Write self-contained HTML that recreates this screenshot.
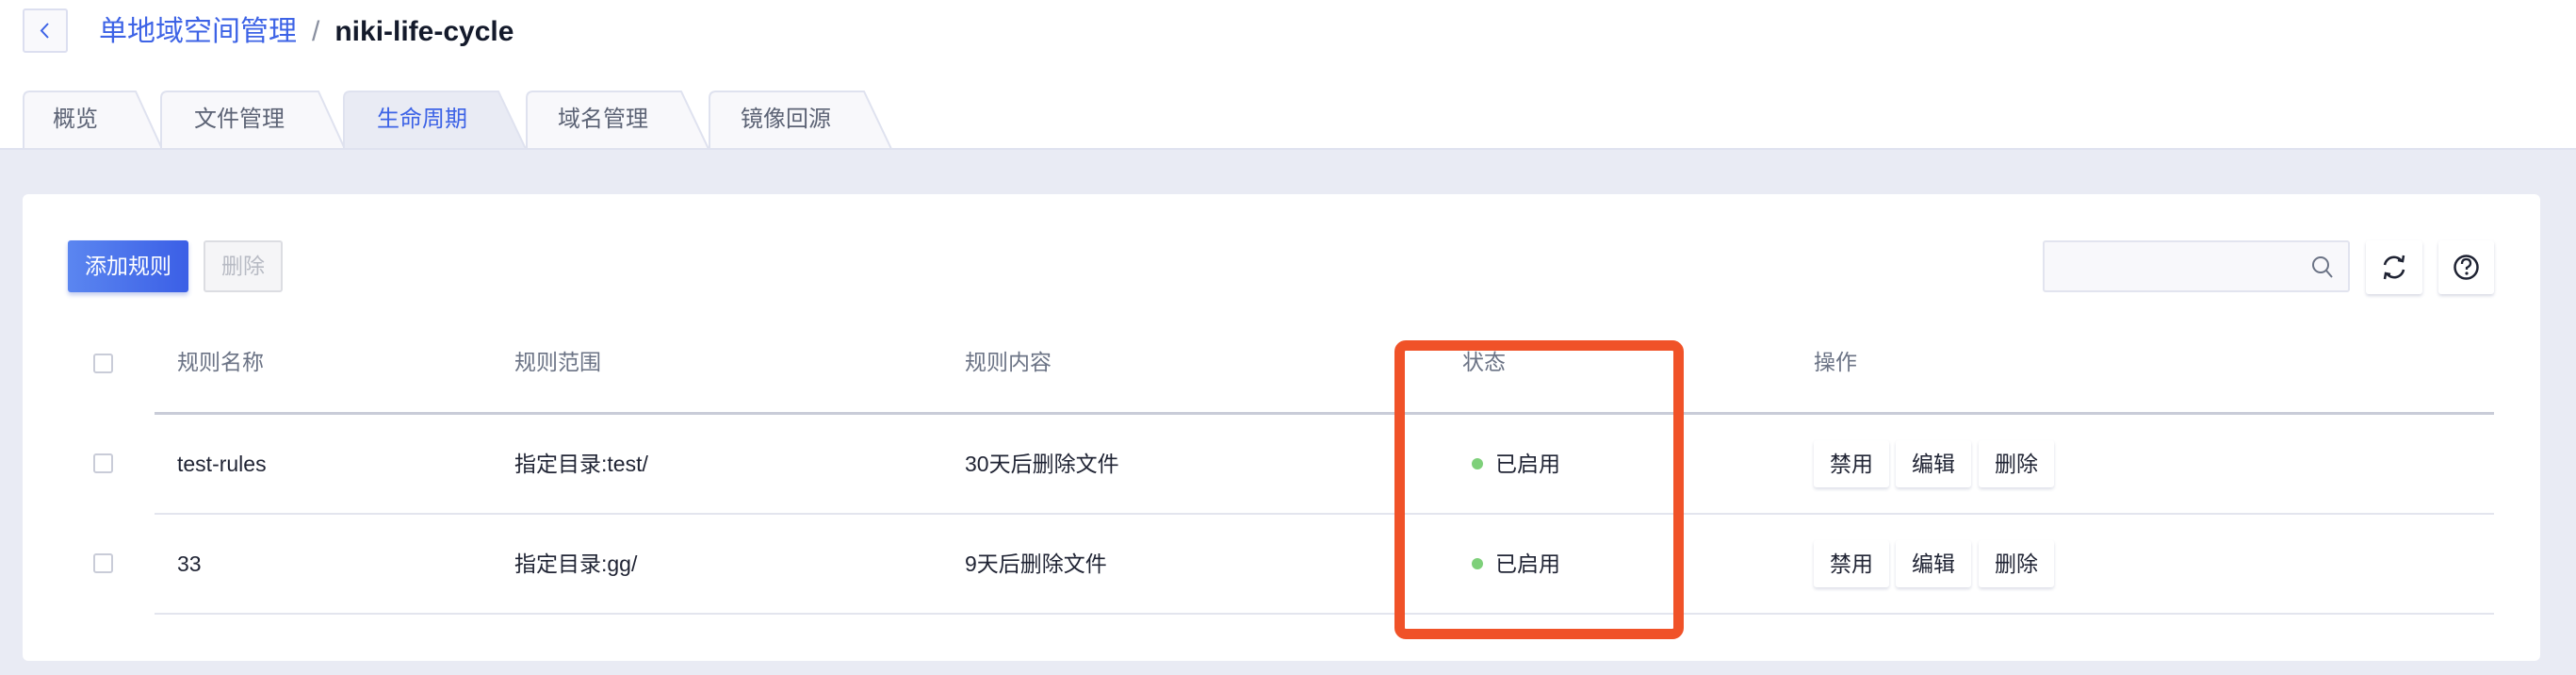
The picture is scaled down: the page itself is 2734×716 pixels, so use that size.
<!DOCTYPE html>
<html><head><meta charset="utf-8"><style>
*{box-sizing:border-box;margin:0;padding:0}
body{width:2734px;height:716px;background:#fff;font-family:"Liberation Sans","Noto Sans CJK SC",sans-serif;position:relative;overflow:hidden;color:#1f2333}
.abs{position:absolute}
.back{left:24px;top:9px;width:48px;height:47px;border:2px solid #dcdff0;border-radius:3px;background:#f9f9fc}
.bc{left:105px;top:14px;font-size:30px;color:#3d63e6;line-height:40px}
.bc .sep{color:#8a90a0;margin:0 16px}
.bc b{color:#141a2b}
.gray{left:0;top:157px;width:2734px;height:559px;background:#e9ebf4;border-top:2px solid #dfe2ef}
.tab{top:96px;height:62px;font-size:24px;color:#5c6375;line-height:62px;padding-left:32px}
.tab svg{position:absolute;left:0;top:0}
.tab span{position:relative}
.card{left:24px;top:206px;width:2672px;height:495px;background:#fff;border-radius:6px}
.btn{border-radius:3px;font-size:23px;text-align:center}
.th{top:369px;font-size:23px;color:#6b7385;line-height:30px}
.td{font-size:23px;color:#1f2333;line-height:30px}
.cb{width:21px;height:21px;border:2px solid #c9ccd8;border-radius:3px;left:99px;background:#fff}
.line{left:164px;width:2483px;height:2px;background:#e3e5ee}
.act{top:467px;width:80px;height:50px;border-radius:3px;background:#fff;box-shadow:0 2px 3px rgba(60,70,120,.18);font-size:23px;line-height:50px;text-align:center;color:#1f2333}
</style></head><body>
<div class="abs back"><svg width="44" height="43" viewBox="0 0 44 43"><path d="M25 14 L18 21.5 L25 29" stroke="#3d63e6" stroke-width="2" fill="none"/></svg></div>
<div class="abs bc">单地域空间管理<span class="sep">/</span><b>niki-life-cycle</b></div>
<div class="abs gray"></div>
<div class="abs tab" style="left:24px;width:150px"><svg width="150" height="62"><path d="M1 62 V8 Q1 1 8 1 H120 L148 62Z" fill="#f8f8fb" stroke="#dfe2ef" stroke-width="2"/></svg><span>概览</span></div>
<div class="abs tab" style="left:170px;width:200px;padding-left:36px"><svg width="200" height="62"><path d="M1 62 V8 Q1 1 8 1 H168 L196 62Z" fill="#f8f8fb" stroke="#dfe2ef" stroke-width="2"/></svg><span>文件管理</span></div>
<div class="abs tab" style="left:364px;width:200px;color:#3d63e6;padding-left:36px"><svg width="200" height="62"><path d="M1 62 V8 Q1 1 8 1 H165 L194 62Z" fill="#e9ebf4" stroke="#dfe2ef" stroke-width="2"/></svg><span>生命周期</span></div>
<div class="abs tab" style="left:558px;width:200px;padding-left:34px"><svg width="200" height="62"><path d="M1 62 V8 Q1 1 8 1 H165 L194 62Z" fill="#f8f8fb" stroke="#dfe2ef" stroke-width="2"/></svg><span>域名管理</span></div>
<div class="abs tab" style="left:752px;width:200px;padding-left:34px"><svg width="200" height="62"><path d="M1 62 V8 Q1 1 8 1 H165 L194 62Z" fill="#f8f8fb" stroke="#dfe2ef" stroke-width="2"/></svg><span>镜像回源</span></div>
<div class="abs card"></div>
<div class="abs btn" style="left:72px;top:255px;width:128px;height:55px;line-height:55px;color:#fff;background:linear-gradient(90deg,#5b86f0,#3b5fe6);box-shadow:0 3px 5px rgba(60,90,200,.3)">添加规则</div>
<div class="abs btn" style="left:216px;top:255px;width:84px;height:55px;line-height:51px;color:#b8bbc4;background:#f5f5f7;border:2px solid #dcdde2">删除</div>
<div class="abs" style="left:2168px;top:255px;width:326px;height:55px;background:#f8f8fb;border:2px solid #e2e4ef;border-radius:3px"><svg class="abs" style="right:14px;top:13px" width="26" height="28"><circle cx="11" cy="11" r="8" stroke="#6b7385" stroke-width="2" fill="none"/><path d="M17 17 L23 24" stroke="#6b7385" stroke-width="2"/></svg></div>
<div class="abs" style="left:2511px;top:255px;width:60px;height:57px;background:#fff;border-radius:3px;box-shadow:0 2px 3px rgba(60,70,120,.2)"><svg width="60" height="57"><path d="M20 26 A10 10 0 0 1 38 22 M40 31 A10 10 0 0 1 22 35" stroke="#1f2333" stroke-width="2.5" fill="none"/><path d="M34 21 L39 22 L40 16 M26 36 L21 35 L20 41" stroke="#1f2333" stroke-width="2.5" fill="none"/></svg></div>
<div class="abs" style="left:2588px;top:255px;width:59px;height:57px;background:#fff;border-radius:3px;box-shadow:0 2px 3px rgba(60,70,120,.2)"><svg width="59" height="57"><circle cx="29.5" cy="28.5" r="12" stroke="#1f2333" stroke-width="2.5" fill="none"/><path d="M25 25 Q25 20 29.5 20 Q34 20 34 24.5 Q34 27 30 29 V31" stroke="#1f2333" stroke-width="2.3" fill="none"/><circle cx="30" cy="35" r="1.6" fill="#1f2333"/></svg></div>
<div class="abs cb" style="top:375px"></div>
<div class="abs th" style="left:188px">规则名称</div>
<div class="abs th" style="left:546px">规则范围</div>
<div class="abs th" style="left:1024px">规则内容</div>
<div class="abs th" style="left:1552px">状态</div>
<div class="abs th" style="left:1925px">操作</div>
<div class="abs line" style="top:437px;height:3px;background:#c9ccd8"></div>
<div class="abs cb" style="top:481px"></div>
<div class="abs td" style="left:188px;top:477px">test-rules</div>
<div class="abs td" style="left:546px;top:477px">指定目录:test/</div>
<div class="abs td" style="left:1024px;top:477px">30天后删除文件</div>
<div class="abs" style="left:1562px;top:486px;width:12px;height:12px;border-radius:6px;background:#7ed07a"></div>
<div class="abs td" style="left:1587px;top:477px">已启用</div>
<div class="abs act" style="left:1925px">禁用</div><div class="abs act" style="left:2012px">编辑</div><div class="abs act" style="left:2100px">删除</div>
<div class="abs line" style="top:544px"></div>
<div class="abs cb" style="top:587px"></div>
<div class="abs td" style="left:188px;top:583px">33</div>
<div class="abs td" style="left:546px;top:583px">指定目录:gg/</div>
<div class="abs td" style="left:1024px;top:583px">9天后删除文件</div>
<div class="abs" style="left:1562px;top:592px;width:12px;height:12px;border-radius:6px;background:#7ed07a"></div>
<div class="abs td" style="left:1587px;top:583px">已启用</div>
<div class="abs act" style="left:1925px;top:573px">禁用</div><div class="abs act" style="left:2012px;top:573px">编辑</div><div class="abs act" style="left:2100px;top:573px">删除</div>
<div class="abs line" style="top:650px"></div>
<div class="abs" style="left:1480px;top:361px;width:307px;height:317px;border:11px solid #f05228;border-radius:12px"></div>
</body></html>
